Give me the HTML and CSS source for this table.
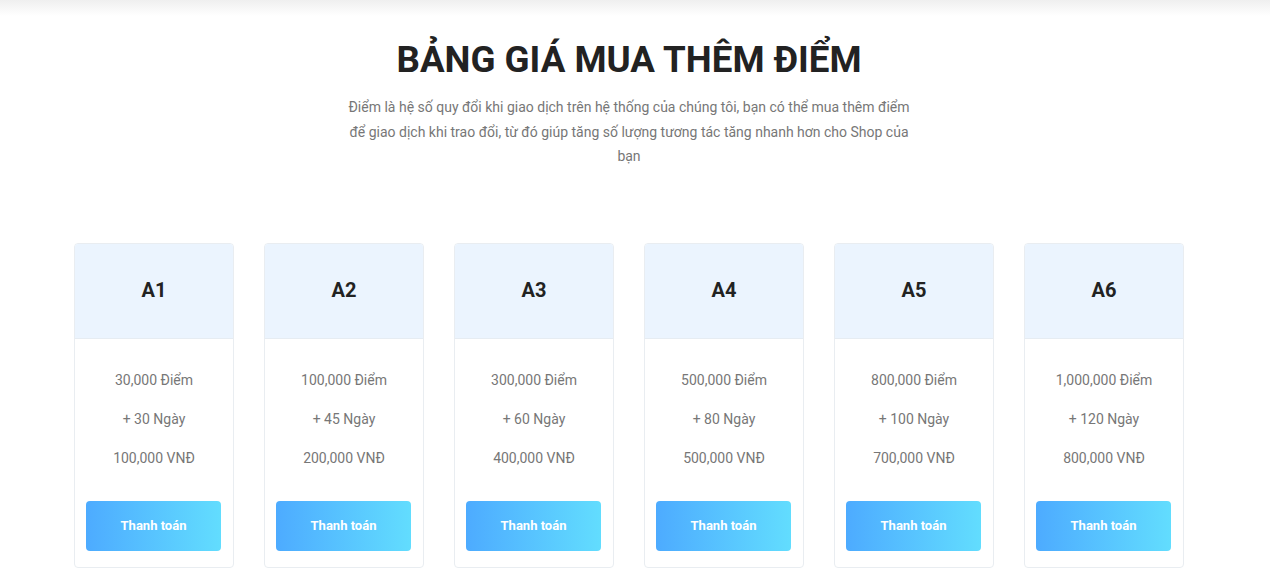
FILE: index.html
```html
<!DOCTYPE html>
<html lang="vi">
<head>
    <meta charset="UTF-8">
    <meta name="viewport" content="width=device-width, initial-scale=1.0">
    <title>Bảng giá mua thêm điểm</title>
    <link rel="stylesheet" href="styles.css">
</head>
<body>

    <!-- bóng của header -->
    <div class="top-shadow"></div>

    <section class="pricing">
        <h1 class="pricing-title">BẢNG GIÁ MUA THÊM ĐIỂM</h1>
        <p class="pricing-desc">Điểm là hệ số quy đổi khi giao dịch trên hệ thống của chúng tôi, bạn có thể mua thêm điểm để giao dịch khi trao đổi, từ đó giúp tăng số lượng tương tác tăng nhanh hơn cho Shop của bạn</p>

        <div class="plans">
            <div class="plan">
                <div class="plan-head">A1</div>
                <div class="plan-body">
                    <p>30,000 Điểm</p>
                    <p>+ 30 Ngày</p>
                    <p>100,000 VNĐ</p>
                    <button class="btn">Thanh toán</button>
                </div>
            </div>
            <div class="plan">
                <div class="plan-head">A2</div>
                <div class="plan-body">
                    <p>100,000 Điểm</p>
                    <p>+ 45 Ngày</p>
                    <p>200,000 VNĐ</p>
                    <button class="btn">Thanh toán</button>
                </div>
            </div>
            <div class="plan">
                <div class="plan-head">A3</div>
                <div class="plan-body">
                    <p>300,000 Điểm</p>
                    <p>+ 60 Ngày</p>
                    <p>400,000 VNĐ</p>
                    <button class="btn">Thanh toán</button>
                </div>
            </div>
            <div class="plan">
                <div class="plan-head">A4</div>
                <div class="plan-body">
                    <p>500,000 Điểm</p>
                    <p>+ 80 Ngày</p>
                    <p>500,000 VNĐ</p>
                    <button class="btn">Thanh toán</button>
                </div>
            </div>
            <div class="plan">
                <div class="plan-head">A5</div>
                <div class="plan-body">
                    <p>800,000 Điểm</p>
                    <p>+ 100 Ngày</p>
                    <p>700,000 VNĐ</p>
                    <button class="btn">Thanh toán</button>
                </div>
            </div>
            <div class="plan">
                <div class="plan-head">A6</div>
                <div class="plan-body">
                    <p>1,000,000 Điểm</p>
                    <p>+ 120 Ngày</p>
                    <p>800,000 VNĐ</p>
                    <button class="btn">Thanh toán</button>
                </div>
            </div>
        </div>
    </section>

</body>
</html>
```

FILE: styles.css
```css
/* Corpo da página */
body {
    margin: 0;
    padding: 0;
    background: #fff;
    font-family: Roboto, 'Liberation Sans', sans-serif;
    color: #777;
    overflow: hidden;
}

.top-shadow {
    height: 16px;
    background: linear-gradient(to bottom, #efefef, #fff);
}

/* Seção de preços */
.pricing {
    width: 1110px;
    margin-left: 74px;
    text-align: center;
}

.pricing-title {
    margin: 20px 0 0;
    font-size: 36.7px;
    font-weight: 700;
    line-height: 48px;
    color: #222;
}

.pricing-desc {
    width: 570px;
    margin: 11px auto 0;
    font-size: 14px;
    line-height: 24.5px;
    color: #777;
}

.plans {
    display: grid;
    grid-template-columns: repeat(6, 160px);
    gap: 30px;
    margin-top: 74px;
}

.plan {
    border: 1px solid #e9edf1;
    border-radius: 4px;
    overflow: hidden;
}

.plan-head {
    height: 92px;
    padding-bottom: 2px;
    display: flex;
    align-items: center;
    justify-content: center;
    background: #ebf4fe;
    border-bottom: 1px solid #e6ecf2;
    font-size: 20px;
    font-weight: 700;
    color: #222;
}

.plan-body {
    padding: 33px 11px 16px;
}

.plan-body p {
    margin: 0 0 22px;
    font-size: 14px;
    line-height: 17px;
    color: #777;
}

/* Botão de pagamento */
.btn {
    display: block;
    width: 135px;
    height: 50px;
    margin: 34px 0 0;
    border: none;
    border-radius: 4px;
    background: linear-gradient(to right, #4dabff, #62ddfe);
    color: #fff;
    font-family: Roboto, 'Liberation Sans', sans-serif;
    font-size: 13px;
    font-weight: 700;
    cursor: pointer;
}
```
